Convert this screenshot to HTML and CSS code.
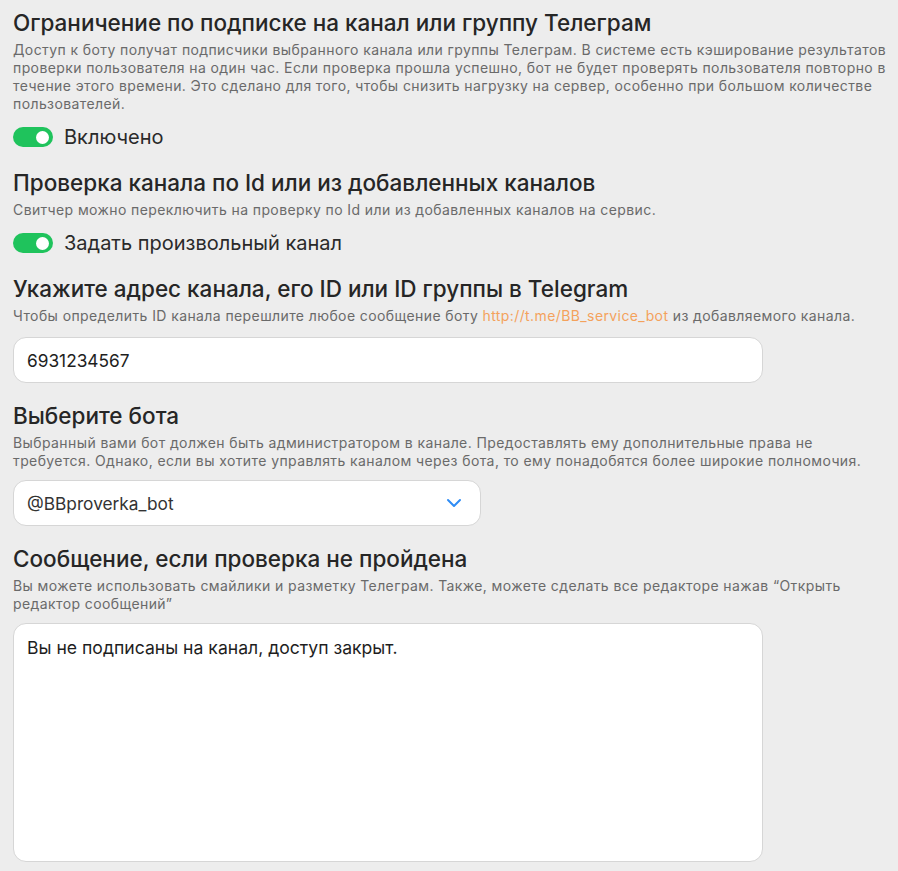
FILE: index.html
```html
<!DOCTYPE html>
<html lang="ru">
<head>
<meta charset="utf-8">
<link rel="stylesheet" href="styles.css">
</head>
<body>
<main class="page">
  <section class="section">
    <h2 class="title">Ограничение по подписке на канал или группу Телеграм</h2>
    <p class="desc">Доступ к боту получат подписчики выбранного канала или группы Телеграм. В системе есть кэширование результатов проверки пользователя на один час. Если проверка прошла успешно, бот не будет проверять пользователя повторно в течение этого времени. Это сделано для того, чтобы снизить нагрузку на сервер, особенно при большом количестве пользователей.</p>
    <label class="toggle-row">
      <span class="toggle"><span class="knob"></span></span>
      <span class="toggle-label">Включено</span>
    </label>
  </section>

  <section class="section">
    <h2 class="title">Проверка канала по Id или из добавленных каналов</h2>
    <p class="desc">Свитчер можно переключить на проверку по Id или из добавленных каналов на сервис.</p>
    <label class="toggle-row">
      <span class="toggle"><span class="knob"></span></span>
      <span class="toggle-label">Задать произвольный канал</span>
    </label>
  </section>

  <section class="section">
    <h2 class="title">Укажите адрес канала, его ID или ID группы в Telegram</h2>
    <p class="desc">Чтобы определить ID канала перешлите любое сообщение боту <a class="link" href="#">http://t.me/BB_service_bot</a> из добавляемого канала.</p>
    <div class="field input">6931234567</div>
  </section>

  <section class="section">
    <h2 class="title">Выберите бота</h2>
    <p class="desc">Выбранный вами бот должен быть администратором в канале. Предоставлять ему дополнительные права не требуется. Однако, если вы хотите управлять каналом через бота, то ему понадобятся более широкие полномочия.</p>
    <div class="field select">
      <span>@BBproverka_bot</span>
      <svg class="chevron" width="16" height="10" viewBox="0 0 16 10"><path d="M2 2 L8 8 L14 2" fill="none" stroke="#2f8cf5" stroke-width="2" stroke-linecap="round" stroke-linejoin="round"/></svg>
    </div>
  </section>

  <section class="section">
    <h2 class="title">Сообщение, если проверка не пройдена</h2>
    <p class="desc">Вы можете использовать смайлики и разметку Телеграм. Также, можете сделать все редакторе нажав “Открыть редактор сообщений”</p>
    <div class="field textarea">Вы не подписаны на канал, доступ закрыт.</div>
  </section>
</main>
</body>
</html>
```
FILE: styles.css
```css
html, body {
  margin: 0;
  padding: 0;
  background: #ededed;
}
body {
  font-family: Inter, "Noto Sans", sans-serif;
  color: #222;
}
.page {
  padding: 9px 4px 0 13px;
  display: flex;
  flex-direction: column;
  gap: 19px;
}
.section {
  display: flex;
  flex-direction: column;
}
.title {
  margin: 0;
  font-size: 22.5px;
  line-height: 28px;
  font-weight: 500;
  color: #262626;
}
.desc {
  margin: 4px 0 0 0;
  font-size: 14px;
  line-height: 18px;
  letter-spacing: 0.4px;
  color: #6a6a6a;
  max-width: 880px;
}
.link {
  color: #f4a25c;
  text-decoration: none;
}
.toggle-row {
  margin-top: 11px;
  display: flex;
  align-items: center;
  gap: 11px;
  height: 26px;
}
.toggle {
  width: 40px;
  height: 20px;
  border-radius: 10px;
  background: #1fc35c;
  display: flex;
  align-items: center;
  justify-content: flex-end;
  padding-right: 4px;
  box-sizing: border-box;
}
.knob {
  width: 13px;
  height: 13px;
  border-radius: 50%;
  background: #fff;
}
.toggle-label {
  font-size: 20px;
  line-height: 26px;
  color: #2a2a2a;
}
.field {
  margin-top: 12px;
  background: #fff;
  border: 1px solid #d6d6d6;
  border-radius: 13px;
  box-sizing: border-box;
  font-size: 17.3px;
  color: #1e1e1e;
  padding: 0 13px;
}
.input {
  width: 750px;
  height: 46px;
  display: flex;
  align-items: center;
}
.select {
  width: 468px;
  height: 46px;
  margin-top: 10px;
  display: flex;
  align-items: center;
  justify-content: space-between;
  padding-right: 18px;
  color: #333;
}
.textarea {
  width: 750px;
  height: 239px;
  padding-top: 13px;
  line-height: 22px;
  margin-top: 10px;
  font-size: 17.6px;
}
```
